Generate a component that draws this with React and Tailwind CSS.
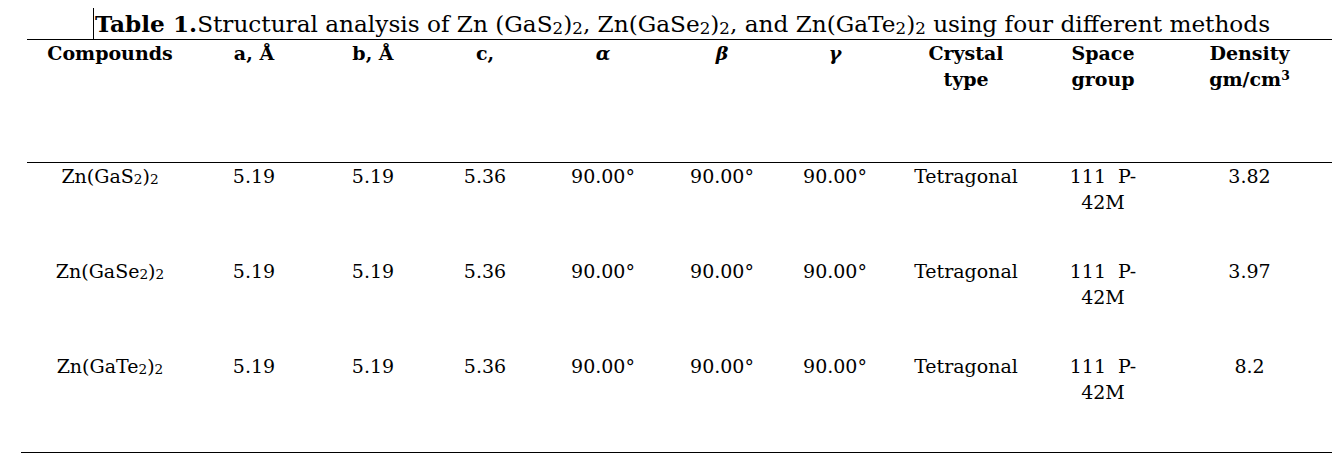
import React from "react";

const cols = "grid grid-cols-[166px_122px_116px_108px_128px_110px_116px_146px_128px_165px]";

const rows = [
  { name: "GaS", density: "3.82" },
  { name: "GaSe", density: "3.97" },
  { name: "GaTe", density: "8.2" },
];

const Sub = ({ children }) => <span className="text-[0.72em] relative top-[0.1em]">{children}</span>;

const App = () => {
  return (
    <div className="w-[1340px] h-[461px] bg-white text-black font-['DejaVu_Serif',serif] overflow-hidden">
      <div className="h-[39px] pl-[93px] flex items-end">
        <div className="border-l border-black h-[31px] pl-[1px] text-[23.2px] leading-[31px] whitespace-nowrap">
          <span className="font-bold">Table 1.</span>Structural analysis of Zn (GaS<Sub>2</Sub>)<Sub>2</Sub>, Zn(GaSe<Sub>2</Sub>)<Sub>2</Sub>, and Zn(GaTe<Sub>2</Sub>)<Sub>2</Sub> using four different methods
        </div>
      </div>
      <div className="ml-[27px] w-[1305px]">
        <div className={`${cols} border-t border-black border-b h-[124px] text-[19px] leading-[26px] font-bold text-center`}>
          <div>Compounds</div>
          <div>a, Å</div>
          <div>b, Å</div>
          <div>c,</div>
          <div className="italic">α</div>
          <div className="italic">β</div>
          <div className="italic">γ</div>
          <div>Crystal<br />type</div>
          <div>Space<br />group</div>
          <div>Density<br />gm/cm<sup className="text-[0.65em]">3</sup></div>
        </div>
        {rows.map((r, i) => (
          <div key={r.name} className={`${cols} ${i === 2 ? "h-[99px]" : "h-[95px]"} text-[19px] leading-[26px] text-center`}>
            <div>Zn({r.name}<Sub>2</Sub>)<Sub>2</Sub></div>
            <div>5.19</div>
            <div>5.19</div>
            <div>5.36</div>
            <div>90.00°</div>
            <div>90.00°</div>
            <div>90.00°</div>
            <div>Tetragonal</div>
            <div>111&nbsp; P-<br />42M</div>
            <div>{r.density}</div>
          </div>
        ))}
        <div className="-ml-[6px] w-[1311px] border-t border-black" />
      </div>
    </div>
  );
};

export default App;
